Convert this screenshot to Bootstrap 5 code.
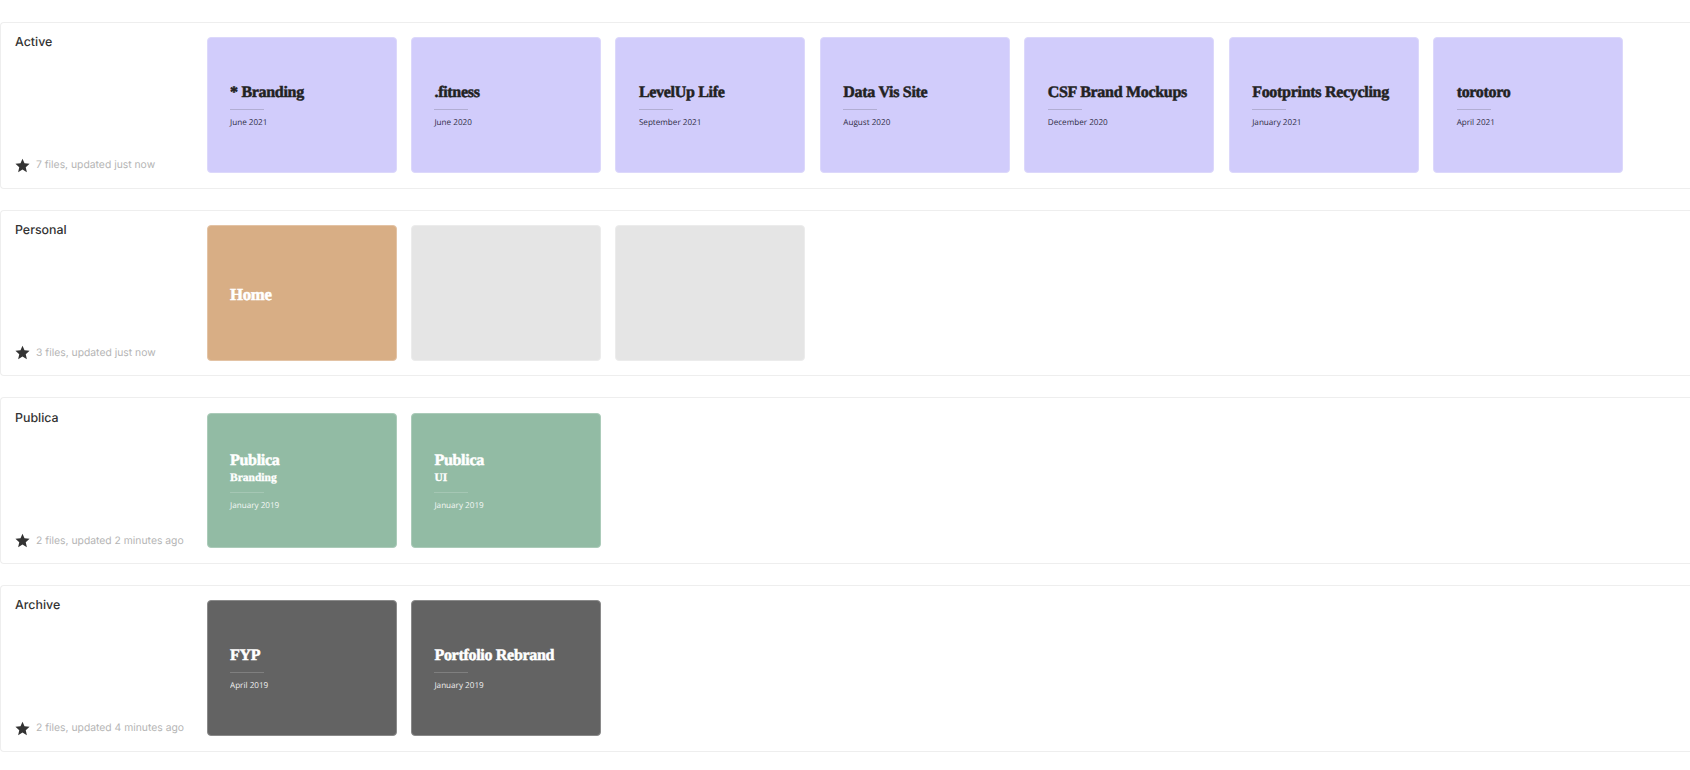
<!DOCTYPE html>
<html lang="en"><head><meta charset="utf-8"><title>Projects</title>
<link href="https://cdn.jsdelivr.net/npm/bootstrap@5.3.0/dist/css/bootstrap.min.css" rel="stylesheet">
<style>
body{background:#fff;font-family:"Inter",sans-serif;color:#2b2b2b;overflow:hidden;text-rendering:geometricPrecision}
.shelf-list{padding-top:22px;display:flex;flex-direction:column;gap:21px}
.shelf{height:166.7px;border:1.5px solid #eeeeee;border-right:0;border-radius:4px 0 0 4px;padding:14.4px 0 14px 14px}
.shelf-side{width:191.5px;flex:none;margin-top:-5px;padding-bottom:.5px}
.shelf-name{font-size:12.4px;line-height:20px;font-weight:500;color:#333}
.shelf-meta{font-size:10.35px;line-height:16px;color:#b5b5b5;white-space:nowrap}
.shelf-meta svg{width:15px;height:15px;flex:none;fill:#333;margin-right:6px}
.tiles{gap:14.45px}
.tile{width:190px;height:135.5px;border-radius:4px;padding:0 22.5px;display:flex;flex-direction:column;justify-content:center;border:1px solid transparent}
.tile-violet{background:#d1ccfb;color:#222;border-color:#dcd8fb}
.tile-tan{background:#d8ae85;color:#fff;border-color:#e3c3a5}
.tile-grey{background:#e5e5e5;border-color:#ececec}
.tile-green{background:#92bba4;color:#fff;border-color:#abcbb9}
.tile-dark{background:#636363;color:#fff;border-color:#8a8a8a}
.tile-title{font-family:"Liberation Serif",serif;font-weight:700;font-size:16px;line-height:20px;letter-spacing:-.3px;-webkit-text-stroke:.5px currentColor;white-space:nowrap;margin-top:3px}
.tile-tan .tile-title{margin-top:5px;font-size:16.8px}
.tile-sub{font-family:"Liberation Serif",serif;font-weight:700;font-size:11.5px;line-height:15px;-webkit-text-stroke:.3px currentColor}
.tile-rule{width:34px;height:1px;background:currentColor;opacity:.18;margin:5.5px 0 6px}
.tile-date{font-family:"Open Sans",sans-serif;font-size:8.15px;line-height:14px;opacity:.9}
.tile-violet .tile-date{opacity:1;color:#2f2d45}
</style></head><body>
<main class="shelf-list">

<section class="shelf d-flex">
<div class="shelf-side d-flex flex-column justify-content-between">
<div class="shelf-name">Active</div>
<div class="shelf-meta d-flex align-items-center"><svg viewBox="0 0 24 24"><path d="M12 1l3.2 7.5 8.1.7-6.1 5.4 1.8 8L12 18.4 5 22.6l1.8-8L.7 9.2l8.1-.7z"/></svg>7 files, updated just now</div>
</div>
<div class="tiles d-flex">
<div class="tile tile-violet"><div class="tile-title">* Branding</div><div class="tile-rule"></div><div class="tile-date">June 2021</div></div>
<div class="tile tile-violet"><div class="tile-title">.fitness</div><div class="tile-rule"></div><div class="tile-date">June 2020</div></div>
<div class="tile tile-violet"><div class="tile-title">LevelUp Life</div><div class="tile-rule"></div><div class="tile-date">September 2021</div></div>
<div class="tile tile-violet"><div class="tile-title">Data Vis Site</div><div class="tile-rule"></div><div class="tile-date">August 2020</div></div>
<div class="tile tile-violet"><div class="tile-title">CSF Brand Mockups</div><div class="tile-rule"></div><div class="tile-date">December 2020</div></div>
<div class="tile tile-violet"><div class="tile-title">Footprints Recycling</div><div class="tile-rule"></div><div class="tile-date">January 2021</div></div>
<div class="tile tile-violet"><div class="tile-title">torotoro</div><div class="tile-rule"></div><div class="tile-date">April 2021</div></div>
</div>
</section>

<section class="shelf d-flex">
<div class="shelf-side d-flex flex-column justify-content-between">
<div class="shelf-name">Personal</div>
<div class="shelf-meta d-flex align-items-center"><svg viewBox="0 0 24 24"><path d="M12 1l3.2 7.5 8.1.7-6.1 5.4 1.8 8L12 18.4 5 22.6l1.8-8L.7 9.2l8.1-.7z"/></svg>3 files, updated just now</div>
</div>
<div class="tiles d-flex">
<div class="tile tile-tan"><div class="tile-title">Home</div></div>
<div class="tile tile-grey"></div>
<div class="tile tile-grey"></div>
</div>
</section>

<section class="shelf d-flex">
<div class="shelf-side d-flex flex-column justify-content-between">
<div class="shelf-name">Publica</div>
<div class="shelf-meta d-flex align-items-center"><svg viewBox="0 0 24 24"><path d="M12 1l3.2 7.5 8.1.7-6.1 5.4 1.8 8L12 18.4 5 22.6l1.8-8L.7 9.2l8.1-.7z"/></svg>2 files, updated 2 minutes ago</div>
</div>
<div class="tiles d-flex">
<div class="tile tile-green"><div class="tile-title">Publica</div><div class="tile-sub">Branding</div><div class="tile-rule"></div><div class="tile-date">January 2019</div></div>
<div class="tile tile-green"><div class="tile-title">Publica</div><div class="tile-sub">UI</div><div class="tile-rule"></div><div class="tile-date">January 2019</div></div>
</div>
</section>

<section class="shelf d-flex">
<div class="shelf-side d-flex flex-column justify-content-between">
<div class="shelf-name">Archive</div>
<div class="shelf-meta d-flex align-items-center"><svg viewBox="0 0 24 24"><path d="M12 1l3.2 7.5 8.1.7-6.1 5.4 1.8 8L12 18.4 5 22.6l1.8-8L.7 9.2l8.1-.7z"/></svg>2 files, updated 4 minutes ago</div>
</div>
<div class="tiles d-flex">
<div class="tile tile-dark"><div class="tile-title">FYP</div><div class="tile-rule"></div><div class="tile-date">April 2019</div></div>
<div class="tile tile-dark"><div class="tile-title">Portfolio Rebrand</div><div class="tile-rule"></div><div class="tile-date">January 2019</div></div>
</div>
</section>

</main>
<script src="https://cdn.jsdelivr.net/npm/bootstrap@5.3.0/dist/js/bootstrap.bundle.min.js"></script>
</body></html>
